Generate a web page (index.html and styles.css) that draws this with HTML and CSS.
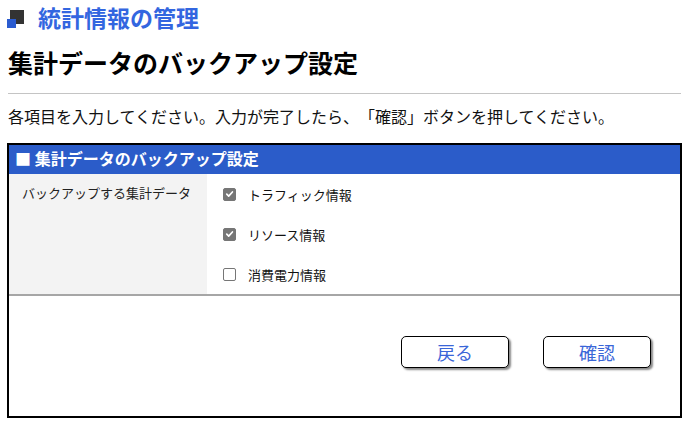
FILE: index.html
```html
<!DOCTYPE html>
<html lang="ja">
<head>
<meta charset="utf-8">
<link rel="stylesheet" href="styles.css">
</head>
<body>
<div class="page">
  <div class="app-title">
    <span class="logo"><span class="logo-back"></span><span class="logo-front"></span></span>
    <span class="app-name">統計情報の管理</span>
  </div>
  <h1 class="page-title">集計データのバックアップ設定</h1>
  <hr class="rule">
  <p class="lead">各項目を入力してください。入力が完了したら、「確認」ボタンを押してください。</p>
  <div class="panel">
    <div class="panel-head">■ 集計データのバックアップ設定</div>
    <div class="form-row">
      <div class="form-label">バックアップする集計データ</div>
      <div class="form-field">
        <label class="check"><span class="box on"><svg viewBox="0 0 12 12" width="12" height="12"><path d="M3 6.2 L5.1 8.3 L9.2 3.8" fill="none" stroke="#fff" stroke-width="1.8" stroke-linecap="round" stroke-linejoin="round"/></svg></span>トラフィック情報</label>
        <label class="check"><span class="box on"><svg viewBox="0 0 12 12" width="12" height="12"><path d="M3 6.2 L5.1 8.3 L9.2 3.8" fill="none" stroke="#fff" stroke-width="1.8" stroke-linecap="round" stroke-linejoin="round"/></svg></span>リソース情報</label>
        <label class="check"><span class="box"></span>消費電力情報</label>
      </div>
    </div>
    <div class="actions">
      <button class="btn">戻る</button>
      <button class="btn">確認</button>
    </div>
  </div>
</div>
</body>
</html>
```
FILE: styles.css
```css
* { box-sizing: border-box; }
html, body { margin: 0; padding: 0; background: #fff; }
body {
  font-family: "Noto Sans CJK JP", "Noto Sans", sans-serif;
  color: #111;
  text-spacing-trim: space-all;
}
.page { padding: 0 7px; }
.app-title {
  display: flex;
  align-items: center;
  height: 35px;
}
.logo {
  position: relative;
  display: inline-block;
  width: 18px;
  height: 18px;
  margin-right: 13px;
  margin-top: 3px;
}
.logo-back {
  position: absolute;
  left: 3px; top: 0;
  width: 14px; height: 14px;
  background: #333;
}
.logo-front {
  position: absolute;
  left: 0; top: 9px;
  width: 9px; height: 9px;
  background: #2b5cd0;
}
.app-name {
  font-size: 23px;
  font-weight: bold;
  color: #3366e0;
  line-height: 1;
}
.page-title {
  margin: 0;
  padding-left: 1px;
  font-size: 25px;
  font-weight: bold;
  line-height: 1;
  padding-top: 15px;
  height: 58px;
  color: #000;
}
.rule {
  margin: 0 1px;
  border: 0;
  border-top: 1px solid #c4c4c4;
  height: 0;
}
.lead {
  margin: 0;
  padding: 11px 1px 0;
  font-size: 16px;
  line-height: 22px;
  height: 49px;
  color: #111;
}
.panel {
  border: 2px solid #000;
  height: 275px;
}
.panel-head {
  background: #2b5cc9;
  color: #fff;
  font-size: 16px;
  font-weight: bold;
  height: 29px;
  line-height: 27px;
  padding-left: 6px;
}
.form-row {
  display: flex;
  border-bottom: 2px solid #a6a6a6;
}
.form-label {
  width: 198px;
  background: #f3f3f3;
  font-size: 13px;
  padding: 10px 0 0 13px;
  line-height: 18px;
  color: #222;
}
.form-field {
  flex: 1;
  padding-left: 16px;
}
.check {
  display: flex;
  align-items: center;
  height: 40px;
  font-size: 13px;
  color: #111;
}
.box {
  display: inline-flex;
  align-items: center;
  justify-content: center;
  width: 13px;
  height: 13px;
  border: 1px solid #767676;
  border-radius: 2px;
  background: #fff;
  margin-right: 12px;
}
.box.on {
  background: #767676;
}
.actions {
  display: flex;
  justify-content: flex-end;
  gap: 34px;
  padding: 40px 29px 0 0;
}
.btn {
  width: 108px;
  height: 32px;
  border: 1px solid #000;
  border-radius: 5px;
  background: #fff;
  box-shadow: 2px 2px 2px #8a8a8a;
  font-family: "Noto Sans CJK JP", sans-serif;
  font-size: 18px;
  color: #3a66d8;
  padding: 0;
  line-height: 1;
}
```
